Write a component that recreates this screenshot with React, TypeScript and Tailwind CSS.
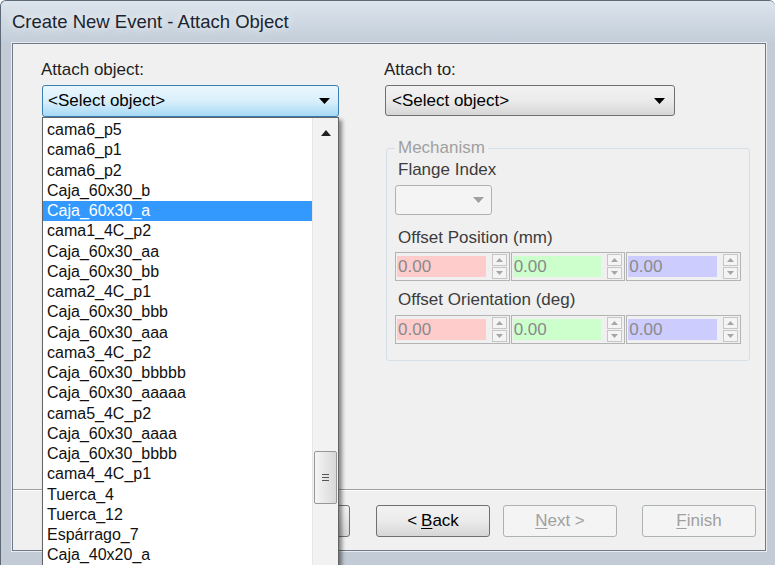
import React from "react";

const items = [
  "cama6_p5",
  "cama6_p1",
  "cama6_p2",
  "Caja_60x30_b",
  "Caja_60x30_a",
  "cama1_4C_p2",
  "Caja_60x30_aa",
  "Caja_60x30_bb",
  "cama2_4C_p1",
  "Caja_60x30_bbb",
  "Caja_60x30_aaa",
  "cama3_4C_p2",
  "Caja_60x30_bbbbb",
  "Caja_60x30_aaaaa",
  "cama5_4C_p2",
  "Caja_60x30_aaaa",
  "Caja_60x30_bbbb",
  "cama4_4C_p1",
  "Tuerca_4",
  "Tuerca_12",
  "Espárrago_7",
  "Caja_40x20_a",
];

function Arrow({ color = "#000" }: { color?: string }) {
  return (
    <svg width="11" height="6" viewBox="0 0 11 6">
      <path d="M0 0 L11 0 L5.5 6 Z" fill={color} />
    </svg>
  );
}

function SpinBtn({ up }: { up?: boolean }) {
  return (
    <div className="flex h-[12px] w-[15px] items-center justify-center border border-[#c6c6c6] bg-[#f4f4f4]">
      <svg width="7" height="4" viewBox="0 0 7 4">
        <path d={up ? "M0 4 L7 4 L3.5 0 Z" : "M0 0 L7 0 L3.5 4 Z"} fill="#a6a6a6" />
      </svg>
    </div>
  );
}

function Spinner({ fill }: { fill: string }) {
  return (
    <div className="flex h-[29px] items-center border border-[#b4b4b4] bg-[#f0f0f0] px-[1px]">
      <div className={`h-[21px] flex-1 pl-[1px] text-[17px] leading-[21px] text-[#8a8a8a] ${fill}`}>0.00</div>
      <div className="ml-[6px] mr-[1px] flex flex-col gap-[1px]">
        <SpinBtn up />
        <SpinBtn />
      </div>
    </div>
  );
}

function SpinRow() {
  return (
    <div className="grid grid-cols-3 gap-[1px]">
      <Spinner fill="bg-[#ffcccc]" />
      <Spinner fill="bg-[#ccffcc]" />
      <Spinner fill="bg-[#ccccff]" />
    </div>
  );
}

export default function App() {
  return (
    <div
      className="relative flex h-[565px] w-[775px] flex-col overflow-hidden rounded-t-[6px] border-l border-t border-[#5d6976] bg-[#c3ccd6] text-[17px] text-black"
      style={{ fontFamily: '"Liberation Sans", Arial, sans-serif' }}
    >
      {/* title bar */}
      <div className="flex h-[42px] shrink-0 items-center bg-gradient-to-b from-[#dce4ec] to-[#c2cdd9] pl-[11px]">
        <span className="text-[18.5px] text-[#1b2530] [text-shadow:0_0_8px_#ffffff]">
          Create New Event - Attach Object
        </span>
      </div>

      {/* client area */}
      <div className="mb-[14px] ml-[11px] mr-[9px] flex flex-1 flex-col border border-[#6f7a86] bg-[#f0f0f0] shadow-[0_0_0_1px_#e8ecf0]">
        <div className="flex flex-1 pl-[28px] pt-[16px]">
          {/* left column */}
          <div className="flex w-[298px] flex-col">
            <div className="h-[20px] leading-[20px] text-[#1e1e1e]">Attach object:</div>
            <div className="relative ml-[1px] mt-[5px]">
              <div className="flex h-[32px] items-center justify-between rounded-[3px] border border-[#3c7fb1] bg-gradient-to-b from-[#eaf6fd] via-[#d9f0fc] to-[#a7d9f5] pl-[5px] pr-[8px]">
                <span>&lt;Select object&gt;</span>
                <Arrow />
              </div>
              {/* open drop-down list */}
              <div className="absolute left-0 top-[32px] z-10 flex h-[460px] w-[297px] border border-[#646464] bg-white text-[16px] shadow-[3px_3px_4px_rgba(0,0,0,0.45)]">
                <div className="flex flex-1 flex-col pt-[2px]">
                  {items.map((it, i) => (
                    <div
                      key={it}
                      className={`h-[20.25px] shrink-0 pl-[4px] leading-[20px] ${
                        i === 4 ? "bg-[#3399ff] text-white" : "text-[#111]"
                      }`}
                    >
                      {it}
                    </div>
                  ))}
                </div>
                {/* scrollbar */}
                <div className="flex w-[26px] flex-col items-center border-l border-[#e6e6e6] bg-[#f2f2f2]">
                  <div className="flex h-[26px] items-center justify-center pt-[4px]">
                    <svg width="10" height="6" viewBox="0 0 10 6">
                      <path d="M0 6 L10 6 L5 0 Z" fill="#222" />
                    </svg>
                  </div>
                  <div className="mt-[307px] flex h-[53px] w-[23px] flex-col items-center justify-center gap-[2px] rounded-[2px] border border-[#979797] bg-gradient-to-r from-[#f5f5f5] to-[#d8d8d8]">
                    <div className="h-[1px] w-[7px] bg-[#555]" />
                    <div className="h-[1px] w-[7px] bg-[#555]" />
                    <div className="h-[1px] w-[7px] bg-[#555]" />
                  </div>
                </div>
              </div>
            </div>
          </div>

          {/* right column */}
          <div className="ml-[45px] flex w-[366px] flex-col">
            <div className="h-[20px] leading-[20px] text-[#1e1e1e]">Attach to:</div>
            <div className="ml-[1px] mt-[5px] flex h-[31px] w-[290px] items-center justify-between rounded-[3px] border border-[#707070] bg-gradient-to-b from-[#f2f2f2] via-[#ebebeb] to-[#d6d6d6] pl-[6px] pr-[9px]">
              <span>&lt;Select object&gt;</span>
              <Arrow />
            </div>

            <fieldset className="ml-[2px] mt-[22px] w-[364px] rounded-[3px] border border-[#d5dfe5] px-[8px] pb-[16px]">
              <legend className="px-[3px] leading-[20px] text-[#a0a0a0]">Mechanism</legend>
              <div className="mt-[2px] h-[20px] pl-[3px] leading-[20px] text-[#3c3c3c]">Flange Index</div>
              <div className="mt-[5px] flex h-[30px] w-[97px] items-center justify-end rounded-[3px] border border-[#adb2b5] bg-[#f4f4f4] pr-[7px]">
                <Arrow color="#a0a0a0" />
              </div>
              <div className="mt-[13px] h-[20px] pl-[3px] leading-[20px] text-[#3c3c3c]">Offset Position (mm)</div>
              <div className="mt-[4px]">
                <SpinRow />
              </div>
              <div className="mt-[9px] h-[20px] pl-[3px] leading-[20px] text-[#3c3c3c]">Offset Orientation (deg)</div>
              <div className="mt-[5px]">
                <SpinRow />
              </div>
            </fieldset>
          </div>
        </div>

        {/* bottom buttons */}
        <div className="flex h-[61px] shrink-0 items-start border-t border-[#a0a0a0] pt-[15px] shadow-[inset_0_1px_0_#ffffff]">
          <div className="ml-[223px] h-[32px] w-[114px] rounded-[3px] border border-[#707070] bg-gradient-to-b from-[#f2f2f2] to-[#d6d6d6]" />
          <div className="ml-[26px] flex h-[32px] w-[114px] items-center justify-center rounded-[3px] border border-[#707070] bg-gradient-to-b from-[#f2f2f2] via-[#ebebeb] to-[#d6d6d6]">
            &lt; <span className="ml-[4px] underline underline-offset-2">B</span>ack
          </div>
          <div className="ml-[13px] flex h-[32px] w-[114px] items-center justify-center rounded-[3px] border border-[#adb2b5] bg-[#f4f4f4] text-[#a0a0a0]">
            <span className="underline underline-offset-2">N</span>ext &gt;
          </div>
          <div className="ml-[25px] flex h-[32px] w-[114px] items-center justify-center rounded-[3px] border border-[#adb2b5] bg-[#f4f4f4] text-[#a0a0a0]">
            <span className="underline underline-offset-2">F</span>inish
          </div>
        </div>
      </div>
    </div>
  );
}
